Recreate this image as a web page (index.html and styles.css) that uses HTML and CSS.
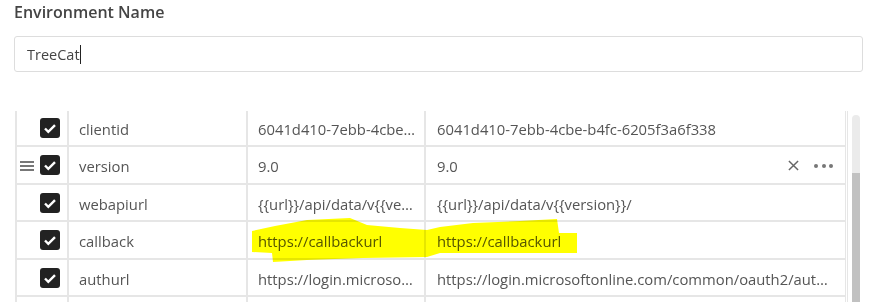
FILE: index.html
```html
<!DOCTYPE html>
<html lang="en">
<head>
  <meta charset="UTF-8">
  <title>Environment</title>
  <link rel="stylesheet" href="styles.css">
</head>
<body>
  <label class="field-label">Environment Name</label>
  <div class="text-input">TreeCat<span class="caret"></span></div>

  <div class="vars">
    <div class="vars-clip">
      <div class="vars-grid">
        <div class="row">
          <div class="cell cell-check"><span class="checkbox"><svg viewBox="0 0 20 20"><path d="M5 10.5l3.3 3.3 6.7-6.7"/></svg></span></div>
          <div class="cell">clientid</div>
          <div class="cell">6041d410-7ebb-4cbe…</div>
          <div class="cell">6041d410-7ebb-4cbe-b4fc-6205f3a6f338</div>
        </div>
        <div class="row">
          <div class="cell cell-check">
            <span class="drag"><i></i><i></i><i></i></span>
            <span class="checkbox"><svg viewBox="0 0 20 20"><path d="M5 10.5l3.3 3.3 6.7-6.7"/></svg></span>
          </div>
          <div class="cell">version</div>
          <div class="cell">9.0</div>
          <div class="cell cell-last">
            <span>9.0</span>
            <span class="actions">
              <svg class="icon-x" viewBox="0 0 12 12"><path d="M1 1l10 10M11 1L1 11"/></svg>
              <span class="dots"><i></i><i></i><i></i></span>
            </span>
          </div>
        </div>
        <div class="row">
          <div class="cell cell-check"><span class="checkbox"><svg viewBox="0 0 20 20"><path d="M5 10.5l3.3 3.3 6.7-6.7"/></svg></span></div>
          <div class="cell">webapiurl</div>
          <div class="cell">{{url}}/api/data/v{{ve…</div>
          <div class="cell">{{url}}/api/data/v{{version}}/</div>
        </div>
        <div class="row">
          <div class="cell cell-check"><span class="checkbox"><svg viewBox="0 0 20 20"><path d="M5 10.5l3.3 3.3 6.7-6.7"/></svg></span></div>
          <div class="cell">callback</div>
          <div class="cell">https://callbackurl</div>
          <div class="cell">https://callbackurl</div>
        </div>
        <div class="row">
          <div class="cell cell-check"><span class="checkbox"><svg viewBox="0 0 20 20"><path d="M5 10.5l3.3 3.3 6.7-6.7"/></svg></span></div>
          <div class="cell">authurl</div>
          <div class="cell">https://login.microso…</div>
          <div class="cell">https://login.microsoftonline.com/common/oauth2/aut…</div>
        </div>
        <div class="row">
          <div class="cell cell-check"></div>
          <div class="cell"></div>
          <div class="cell"></div>
          <div class="cell"></div>
        </div>
      </div>
    </div>
    <div class="scrollbar"><div class="thumb"></div></div>
  </div>

  <!-- marker scribble over the callback row -->
  <svg class="marker" viewBox="0 0 873 302">
    <polygon points="252,231 275,226 307,220 350,218 367,225 400,228 427,230 440,227 473,223 520,221 557,219 559,233 577,233 577,253 440,253 427,257 363,258 307,260 273,262 272,253 252,252"/>
  </svg>
</body>
</html>
```

FILE: styles.css
```css
* {
  margin: 0;
  padding: 0;
  box-sizing: border-box;
}

html, body {
  height: 100%;
  overflow: hidden;
}

body {
  position: relative;
  padding: 0 10px 0 14px;
  font-family: 'Open Sans', 'Segoe UI', sans-serif;
  background-color: white;
  color: #555;
}

.field-label {
  display: block;
  padding-top: 1px;
  height: 22px;
  line-height: 22px;
  font-size: 16px;
  font-weight: 600;
  color: #444;
}

.text-input {
  display: flex;
  align-items: center;
  margin-top: 14px;
  height: 36px;
  padding: 1px 12px 0;
  border: 1px solid #dddddd;
  border-radius: 3px;
  font-size: 14.5px;
  color: #444;
}

.caret {
  display: inline-block;
  width: 1px;
  height: 19px;
  background-color: #222;
}

.vars {
  display: flex;
  margin: 39px 3px 0 1px;
  height: 191px;
}

.vars-clip {
  flex: 1;
  overflow: hidden;
}

.vars-grid {
  margin-top: -1.5px;
  border-left: 2px solid #e6e6e6;
  border-right: 1px solid #e6e6e6;
  padding-right: 1px;
}

.row {
  display: grid;
  grid-template-columns: 52px 179px 178px 1fr;
  height: 37.5px;
  border-bottom: 2px solid #e6e6e6;
}

.cell {
  display: flex;
  align-items: center;
  padding: 3px 10px 0;
  border-right: 2px solid #e6e6e6;
  font-size: 14.8px;
  white-space: nowrap;
  overflow: hidden;
}

.cell:last-child {
  border-right: 1px solid #e6e6e6;
  padding-left: 11px;
}

.cell-check {
  justify-content: flex-end;
  gap: 6px;
  padding: 1px 7px 0 0;
}

.checkbox {
  display: block;
  width: 20px;
  height: 20px;
  border-radius: 3px;
  background-color: #222;
}

.checkbox svg {
  display: block;
  width: 20px;
  height: 20px;
  fill: none;
  stroke: white;
  stroke-width: 2.4;
}

.drag {
  display: flex;
  flex-direction: column;
  gap: 2px;
  width: 14px;
  margin-top: 1px;
}

.drag i {
  display: block;
  height: 2px;
  background-color: #777;
}

.cell-last {
  padding-right: 12px;
}

.actions {
  display: flex;
  align-items: center;
  gap: 15px;
  margin-left: auto;
  margin-top: -1px;
}

.icon-x {
  width: 11px;
  height: 11px;
  fill: none;
  stroke: #666;
  stroke-width: 1.6;
}

.dots {
  display: flex;
  gap: 3.5px;
}

.dots i {
  display: block;
  width: 4px;
  height: 4px;
  border-radius: 50%;
  background-color: #777;
}

.scrollbar {
  display: flex;
  flex-direction: column;
  width: 8px;
  margin: 4px 0 0 4px;
  padding-top: 58px;
  border-radius: 4px 4px 0 0;
  background-color: #ebebeb;
}

.thumb {
  flex: 1;
  background-color: #c1c1c1;
}

.marker {
  position: absolute;
  top: 0;
  left: 0;
  width: 873px;
  height: 302px;
  pointer-events: none;
  mix-blend-mode: multiply;
}

.marker polygon {
  fill: #ffff00;
}
```
